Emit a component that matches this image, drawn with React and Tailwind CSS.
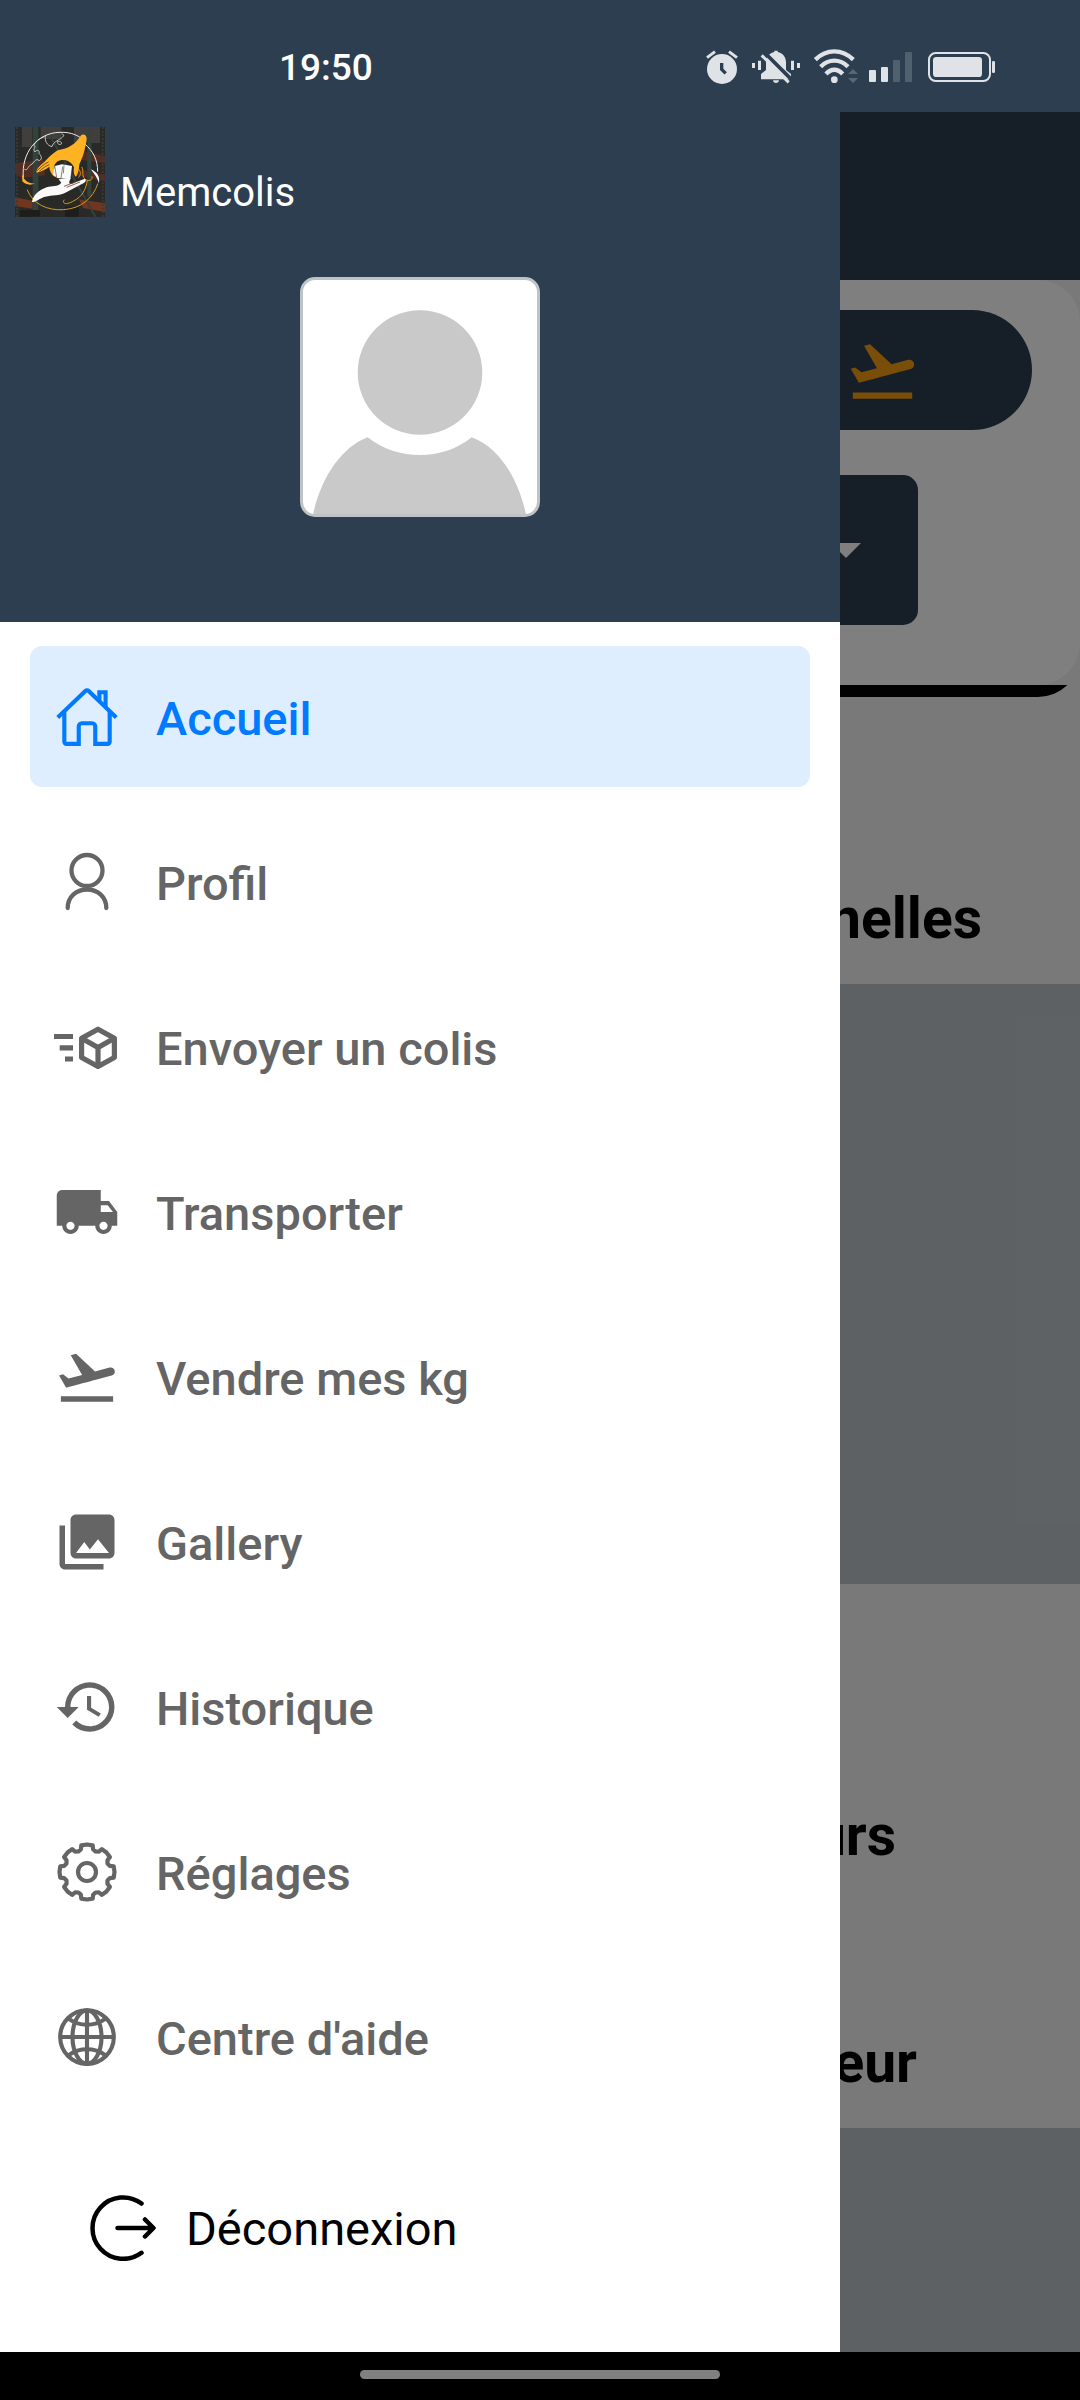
import React from "react";
import { MdCollections, MdFlightTakeoff, MdHistory, MdLocalShipping } from "react-icons/md";
import { IoGlobeOutline } from "react-icons/io5";

const ICON = "size-[66px] shrink-0";

function HomeIcon() {
  return (
    <svg viewBox="0 0 512 512" className={ICON} fill="none" stroke="currentColor" strokeWidth="32" aria-hidden="true">
      <path d="M80 212v236a16 16 0 0 0 16 16h96V328a24 24 0 0 1 24-24h80a24 24 0 0 1 24 24v136h96a16 16 0 0 0 16-16V212" />
      <path d="M483 259 266.900 52c-5-5.300-16.700-5.300-21.800 0L29 259" />
      <path d="M400 179V64h-48v69" />
    </svg>
  );
}

function UserIcon() {
  return (
    <svg viewBox="0 0 66 66" className={ICON} fill="none" stroke="currentColor" strokeWidth="4.300" strokeLinecap="round" aria-hidden="true">
      <circle cx="33" cy="21.500" r="15.500" />
      <path d="M13.700 59C13.700 48 22 40.500 33 40.500S52.300 48 52.300 59" />
    </svg>
  );
}

function SendPackageIcon() {
  return (
    <svg viewBox="0 0 66 66" className={ICON} fill="none" stroke="currentColor" strokeWidth="5.200" aria-hidden="true">
      <path d="M0 22.500h19M5.700 33.800h13.300M11 45h8" />
      <path strokeLinejoin="round" d="M44 15.200 60.400 24.300V43.500L44 52.500 27.600 43.500V24.300Z" />
      <path d="M27.600 24.300 44 33.500 60.400 24.300M44 33.500V52.500" />
    </svg>
  );
}

/* Outline of an eight-toothed wheel, walked tooth by tooth. */
const gearPath = (() => {
  const points = [];
  for (let tooth = 0; tooth < 8; tooth += 1) {
    [[-12, 27.3], [0, 27.5], [12, 27.3], [15, 23.6], [22.5, 22.2], [30, 23.6]].forEach(([turn, radius]) => {
      const angle = ((tooth * 45 + turn) * Math.PI) / 180;
      points.push(`${(33 + radius * Math.sin(angle)).toFixed(2)} ${(33 - radius * Math.cos(angle)).toFixed(2)}`);
    });
  }
  return `M${points.join("L")}Z`;
})();

function GearIcon() {
  return (
    <svg viewBox="0 0 66 66" className={ICON} fill="none" stroke="currentColor" strokeWidth="4.200" strokeLinejoin="round" aria-hidden="true">
      <path d={gearPath} />
      <circle cx="33" cy="33" r="9" />
    </svg>
  );
}

function LogoutIcon() {
  return (
    <svg viewBox="0 0 66 66" className={ICON} fill="none" stroke="currentColor" strokeWidth="4.500" strokeLinecap="round" strokeLinejoin="round" aria-hidden="true">
      <path d="M51.500 8.500A30.700 30.700 0 1 0 51.500 57.800" />
      <path d="M27.500 33H63M55 24.500 63.500 33 55 41.500" />
    </svg>
  );
}

function StatusIcons() {
  return (
    <div className="flex gap-[10px] text-[#dfe3e7]">
      <svg viewBox="135 81 102 114" className="h-[38px] w-[34px]" aria-label="Alarme" role="img">
        <circle cx="186" cy="147" r="45" fill="currentColor" />
        <path d="M141 113 165 95M231 113 207 95" stroke="currentColor" strokeWidth="9" />
        <path d="M185 129V148L197 160" fill="none" stroke="#2c3e50" strokeWidth="10" />
      </svg>
      <svg viewBox="267 81 156 114" className="h-[38px] w-[52px]" aria-label="Silencieux" role="img">
        <path d="M303 178V162L318 150V128C318 110 329 99 343 96V92H353V96C368 99 378 111 378 127V150L393 162V178Z" fill="currentColor" />
        <path d="M339 181H357C356 192 340 192 339 181Z" fill="currentColor" />
        <path d="M312 96 394 178" stroke="#2c3e50" strokeWidth="11" />
        <path d="M305 106 386 187" stroke="currentColor" strokeWidth="9" />
        <path d="M276 129h9v15h-9zM294 122h9v28h-9zM393 122h9v28h-9zM411 129h9v15h-9z" fill="currentColor" />
      </svg>
      <svg viewBox="453 81 144 114" className="h-[38px] w-[48px]" aria-label="Wi-Fi" role="img">
        <circle cx="523" cy="179" r="10" fill="currentColor" />
        <g fill="none" stroke="currentColor" strokeWidth="13">
          <path d="M466 119C500 86 546 86 580 119" />
          <path d="M482 140C506 116 540 116 564 140" />
          <path d="M498 162C513 145 533 145 548 162" />
        </g>
        <path d="M579 147 594 162H564ZM579 189 594 174H564Z" fill="#5a6774" />
      </svg>
      <svg viewBox="627 81 132 114" className="h-[38px] w-[44px]" aria-label="Réseau mobile" role="img">
        <rect x="627" y="150" width="21" height="36" rx="3" fill="currentColor" />
        <rect x="663" y="141" width="21" height="45" rx="3" fill="currentColor" />
        <rect x="699" y="120" width="21" height="66" rx="3" fill="#51606e" />
        <rect x="735" y="96" width="21" height="90" rx="3" fill="#51606e" />
      </svg>
      <svg viewBox="789 81 216 114" className="h-[38px] w-[72px]" aria-label="Batterie" role="img">
        <rect x="807" y="99" width="183" height="84" rx="20" fill="none" stroke="currentColor" strokeWidth="6" />
        <rect x="819" y="111" width="147" height="60" rx="10" fill="currentColor" />
        <rect x="996" y="123" width="9" height="36" rx="4" fill="currentColor" />
      </svg>
    </div>
  );
}

function Logo() {
  return (
    <svg viewBox="45 51 270 270" className="size-[90px] shrink-0" role="img" aria-label="Logo Memcolis">
      <rect x="45" y="51" width="270" height="270" fill="#292a27" />
      <path d="M66 51h30v60H66zM122 51h62v36h-62zM222 51h78v48h-78z" fill="#413f3d" />
      <path d="M45 160 130 148 135 196 66 204 45 190zM225 118 315 138V160L225 146zM228 176 315 194V214L228 196z" fill="#542d22" />
      <path d="M45 262 98 272V296L45 288zM236 268 315 280V306L250 294z" fill="#71361f" />
      <path d="M98 51h17v270H98zM262 60h12v200h-12z" fill="#34423e" />
      <path d="M152 80 286 320" stroke="#33423f" strokeWidth="6" />
      <path d="M51 51V321M308 51V321" stroke="#383d38" strokeWidth="5" strokeDasharray="6 5" />
      <path d="M60 300h60v20H60zM196 290h40v30h-40z" fill="#1c1d1c" />
      <g fill="none" strokeLinecap="round">
        <path d="M70 202C63 128 112 68 180 67C205 66 225 72 240 82M255 102C280 124 293 150 293 184" stroke="#eceae6" strokeWidth="3" />
        <path d="M132 80C122 84 108 92 101 106C112 108 96 116 105 126C110 118 120 120 117 130C124 138 128 146 118 152C106 142 102 160 93 164C82 170 84 184 74 178M136 78C134 92 140 106 156 110C160 96 172 92 182 86C190 80 196 74 186 72M172 96C178 90 186 96 184 102C178 106 172 102 172 96" stroke="#dddcd8" strokeWidth="2.500" />
        <path d="M82 240C98 282 142 302 190 299C246 296 280 262 293 222M192 270C184 284 204 284 222 272C244 262 258 240 262 212M246 172C252 184 244 196 254 206C262 216 280 212 276 200M236 178C244 186 242 196 236 202" stroke="#d99a1e" strokeWidth="3" />
      </g>
      <path d="M66 193C72 212 86 222 105 220C94 226 78 226 67 214Z" fill="#ffb322" />
      <path d="M272 178C292 186 300 200 297 220C292 204 284 192 272 178Z" fill="#fafafa" />
      <path d="M244 75C252 70 261 76 260 88C256 112 252 134 242 154C234 168 240 184 228 200C222 198 220 186 222 172C216 156 200 148 184 150C170 152 160 164 162 178L166 202C154 194 148 182 148 170C138 178 124 184 110 188C108 178 118 168 130 158C146 144 158 128 176 120C204 116 226 104 244 75Z" fill="#ffb322" />
      <path d="M112 182C124 168 136 160 146 156M118 184C128 174 138 168 148 164" stroke="#292a27" strokeWidth="2" fill="none" />
      <path d="M164 168 186 163 216 168 211 208 172 204 159 194Z" fill="#fafafa" />
      <path d="M188 170 183 204M164 168 170 202M192 166 190 190" stroke="#6c6c6a" strokeWidth="2.500" />
      <path d="M96 276C98 258 116 240 140 232C156 226 172 232 184 218L176 208 212 204C206 218 206 222 214 222L254 206C260 208 258 216 250 220L196 248C178 258 156 254 136 260C120 264 108 276 96 276Z" fill="#fafafa" />
      <path d="M200 232 240 216M192 229 226 216" stroke="#7c4338" strokeWidth="2.500" />
    </svg>
  );
}

function Avatar() {
  return (
    <div className="size-[240px] overflow-hidden rounded-[15px] border-3 border-[#bdc3c7] bg-white">
      <svg viewBox="3 3 234 234" className="size-full" role="img" aria-label="Photo de profil">
        <circle cx="120" cy="95.500" r="62.300" fill="#c9c9c9" />
        <path d="M12.500 240C20 202 41 170 67.700 160.200C98 184 142 184 171.700 160.200C199 170 219 202 226.500 240Z" fill="#c9c9c9" />
      </svg>
    </div>
  );
}

const menu = [
  { label: "Accueil", icon: <HomeIcon />, active: true },
  { label: "Profil", icon: <UserIcon /> },
  { label: "Envoyer un colis", icon: <SendPackageIcon /> },
  { label: "Transporter", icon: <MdLocalShipping className={ICON} aria-hidden="true" /> },
  { label: "Vendre mes kg", icon: <MdFlightTakeoff className={ICON} aria-hidden="true" /> },
  { label: "Gallery", icon: <MdCollections className={ICON} aria-hidden="true" /> },
  { label: "Historique", icon: <MdHistory className={ICON} aria-hidden="true" /> },
  { label: "Réglages", icon: <GearIcon /> },
  { label: "Centre d'aide", icon: <IoGlobeOutline className={ICON} aria-hidden="true" /> },
];

function Drawer() {
  return (
    <aside className="z-10 col-start-1 row-start-1 flex w-7/9 flex-col bg-white">
      <header className="bg-[#2c3e50] px-[15px] pt-[15px] pb-[105px]">
        <div className="flex items-end gap-[15px]">
          <Logo />
          <h1 className="text-[40px] leading-[48px] text-white">Memcolis</h1>
        </div>
        <div className="mt-[60px] flex justify-center">
          <Avatar />
        </div>
      </header>
      <nav className="flex flex-col gap-6 px-[30px] pt-6" aria-label="Menu principal">
        {menu.map(({ label, icon, active }) => (
          <a
            key={label}
            href="#"
            aria-current={active ? "page" : undefined}
            className={
              active
                ? "flex h-[141px] items-center gap-9 rounded-xl bg-[#deeeff] px-6 text-[#007aff]"
                : "flex h-[141px] items-center gap-9 rounded-xl px-6 text-[#656565]"
            }
          >
            {icon}
            <span className="pt-1 text-[47px] leading-[56px] font-medium">{label}</span>
          </a>
        ))}
      </nav>
      <button type="button" className="mt-[88px] flex items-center gap-[30px] self-start px-[90px] text-black">
        <LogoutIcon />
        <span className="pt-0.5 text-[47px] leading-[56px]">Déconnexion</span>
      </button>
    </aside>
  );
}

function Page() {
  return (
    <main className="col-start-1 row-start-1 flex flex-col bg-[#f2f2f2] text-black">
      <div className="h-[168px] bg-[#2c3e50]" />
      <section className="flex h-[405px] flex-col items-end rounded-r-[42px] bg-white pt-[30px]">
        <button
          type="button"
          aria-label="Vendre mes kg"
          className="mr-12 flex h-[120px] w-1/3 items-center justify-end rounded-r-full bg-[#2c3e50] pr-[112px]"
        >
          <MdFlightTakeoff className="size-[75px] text-[#f39c12]" />
        </button>
        <button
          type="button"
          aria-label="Choisir"
          className="mt-[45px] mr-[162px] flex h-[150px] w-1/5 items-center justify-end rounded-[15px] bg-[#2c3e50] pr-[57px]"
        >
          <svg viewBox="0 0 30 15" className="h-[15px] w-[30px]" aria-hidden="true">
            <path d="M0 0h30L15 15z" fill="#fff" />
          </svg>
        </button>
      </section>
      <div className="flex h-3 items-end overflow-hidden">
        <div className="h-[84px] flex-1 shrink-0 rounded-r-[42px] bg-black" />
      </div>
      <h2 className="flex h-[287px] items-end justify-end pr-[98px] pb-[31px] text-[57px] leading-[68px] font-bold">nelles</h2>
      <div className="h-[600px] bg-[#bdc3c7]" />
      <h2 className="flex h-[317px] items-end justify-end pr-[184px] pb-[31px] text-[57px] leading-[68px] font-bold">urs</h2>
      <h2 className="flex h-[227px] items-end justify-end pr-[163px] pb-[31px] text-[57px] leading-[68px] font-bold">eur</h2>
      <div className="min-h-[224px] flex-1 bg-[#bdc3c7]" />
    </main>
  );
}

export default function App() {
  return (
    <div className="flex min-h-screen flex-col overflow-hidden bg-black font-[Roboto,sans-serif]">
      <div className="flex h-28 items-start justify-between bg-[#2c3e50] pt-[47px] pr-[85px] pl-[279px]">
        <time className="text-[37px] leading-[42px] font-medium text-white">19:50</time>
        <StatusIcons />
      </div>
      <div className="grid flex-1 grid-cols-1">
        <Page />
        <div className="col-start-1 row-start-1 z-5 bg-black/50" />
        <Drawer />
      </div>
      <div className="flex h-12 justify-center bg-black pt-[18px]">
        <div className="h-[9px] w-1/3 rounded-full bg-[#808080]" />
      </div>
    </div>
  );
}
